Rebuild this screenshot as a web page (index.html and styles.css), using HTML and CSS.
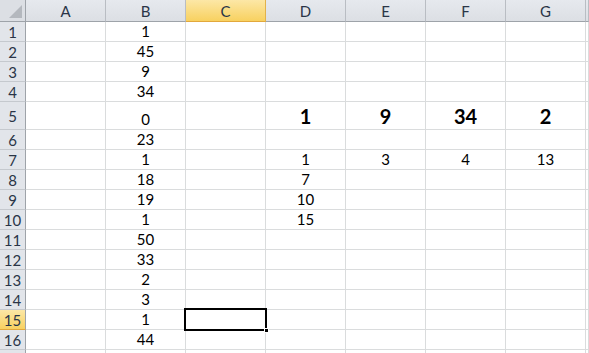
FILE: index.html
```html
<!DOCTYPE html>
<html lang="en">
<head>
	<meta charset="UTF-8">
	<title>Sheet1</title>
<link rel="stylesheet" href="styles.css">
</head>
<body>
<div class="sheet">
	<div class="hd corner"><span class="tri"></span></div>
	<div class="hd">A</div><div class="hd">B</div><div class="hd sel">C</div><div class="hd">D</div><div class="hd">E</div><div class="hd">F</div><div class="hd">G</div><div class="hd"></div>

	<div class="rh">1</div><div class="c"></div><div class="c">1</div><div class="c"></div><div class="c"></div><div class="c"></div><div class="c"></div><div class="c"></div><div class="c"></div>
	<div class="rh">2</div><div class="c"></div><div class="c">45</div><div class="c"></div><div class="c"></div><div class="c"></div><div class="c"></div><div class="c"></div><div class="c"></div>
	<div class="rh">3</div><div class="c"></div><div class="c">9</div><div class="c"></div><div class="c"></div><div class="c"></div><div class="c"></div><div class="c"></div><div class="c"></div>
	<div class="rh">4</div><div class="c"></div><div class="c">34</div><div class="c"></div><div class="c"></div><div class="c"></div><div class="c"></div><div class="c"></div><div class="c"></div>
	<div class="rh">5</div><div class="c"></div><div class="c">0</div><div class="c"></div><div class="c big">1</div><div class="c big">9</div><div class="c big">34</div><div class="c big">2</div><div class="c"></div>
	<div class="rh">6</div><div class="c"></div><div class="c">23</div><div class="c"></div><div class="c"></div><div class="c"></div><div class="c"></div><div class="c"></div><div class="c"></div>
	<div class="rh">7</div><div class="c"></div><div class="c">1</div><div class="c"></div><div class="c sm">1</div><div class="c sm">3</div><div class="c sm">4</div><div class="c sm">13</div><div class="c"></div>
	<div class="rh">8</div><div class="c"></div><div class="c">18</div><div class="c"></div><div class="c">7</div><div class="c"></div><div class="c"></div><div class="c"></div><div class="c"></div>
	<div class="rh">9</div><div class="c"></div><div class="c">19</div><div class="c"></div><div class="c">10</div><div class="c"></div><div class="c"></div><div class="c"></div><div class="c"></div>
	<div class="rh">10</div><div class="c"></div><div class="c">1</div><div class="c"></div><div class="c">15</div><div class="c"></div><div class="c"></div><div class="c"></div><div class="c"></div>
	<div class="rh">11</div><div class="c"></div><div class="c">50</div><div class="c"></div><div class="c"></div><div class="c"></div><div class="c"></div><div class="c"></div><div class="c"></div>
	<div class="rh">12</div><div class="c"></div><div class="c">33</div><div class="c"></div><div class="c"></div><div class="c"></div><div class="c"></div><div class="c"></div><div class="c"></div>
	<div class="rh">13</div><div class="c"></div><div class="c">2</div><div class="c"></div><div class="c"></div><div class="c"></div><div class="c"></div><div class="c"></div><div class="c"></div>
	<div class="rh">14</div><div class="c"></div><div class="c">3</div><div class="c"></div><div class="c"></div><div class="c"></div><div class="c"></div><div class="c"></div><div class="c"></div>
	<div class="rh sel">15</div><div class="c"></div><div class="c">1</div><div class="c active"><span class="cursor"><span class="handle"></span></span></div><div class="c"></div><div class="c"></div><div class="c"></div><div class="c"></div><div class="c"></div>
	<div class="rh">16</div><div class="c"></div><div class="c">44</div><div class="c"></div><div class="c"></div><div class="c"></div><div class="c"></div><div class="c"></div><div class="c"></div>
	<div class="rh"></div><div class="c"></div><div class="c"></div><div class="c"></div><div class="c"></div><div class="c"></div><div class="c"></div><div class="c"></div><div class="c"></div>
</div>
</body>
</html>
```
FILE: styles.css
```css
*{padding:0;margin:0;box-sizing:border-box;}
body{
	background:#fff;
	font-family:Lato,"Liberation Sans",sans-serif;
	font-size:15px;
	color:#000;
	overflow:hidden;
}
/*表格*/
.sheet{
	display:grid;
	grid-template-columns:26px repeat(7,80px) 1fr;
	grid-template-rows:22px repeat(4,20px) 28px repeat(12,20px);
	height:353px;
	overflow:hidden;
}
.hd{
	background:linear-gradient(#e6e9ee,#dcdfe4);
	border-right:1px solid #b9bdc3;
	border-bottom:1px solid #9ea3a9;
	color:#2a3547;
	display:flex;
	align-items:center;
	justify-content:center;
	padding-top:1px;
}
.hd.sel{
	background:linear-gradient(#fce7a6,#f8d160);
	border-right-color:#e2b24a;
	border-bottom-color:#e2a83c;
}
.corner{
	position:relative;
	background:#dcdfe4;
	border-right-color:#9ea3a9;
}
.corner .tri{
	position:absolute;
	right:3px;
	bottom:3px;
	width:0;
	height:0;
	border-left:13px solid transparent;
	border-bottom:13px solid #b4b8be;
}
.rh{
	background:#e2e5ea;
	border-right:1px solid #9ea3a9;
	border-bottom:1px solid #c5c9ce;
	color:#2a3547;
	display:flex;
	align-items:center;
	justify-content:center;
}
.rh.sel{
	background:linear-gradient(#fce7a6,#f8d160);
	border-bottom-color:#e2a83c;
}
.c{
	border-right:1px solid #dadcdd;
	border-bottom:1px solid #dadcdd;
	display:flex;
	align-items:flex-end;
	justify-content:center;
	line-height:18px;
	padding-bottom:1px;
}
.c.big{
	font-size:20px;
	font-weight:bold;
	line-height:24px;
}
.c.active{
	position:relative;
}
.cursor{
	position:absolute;
	left:-2px;
	top:-2px;
	right:-2px;
	bottom:-2px;
	border:2px solid #000;
}
.handle{
	position:absolute;
	right:-4px;
	bottom:-4px;
	width:5px;
	height:5px;
	background:#000;
	border:1px solid #fff;
}
```
